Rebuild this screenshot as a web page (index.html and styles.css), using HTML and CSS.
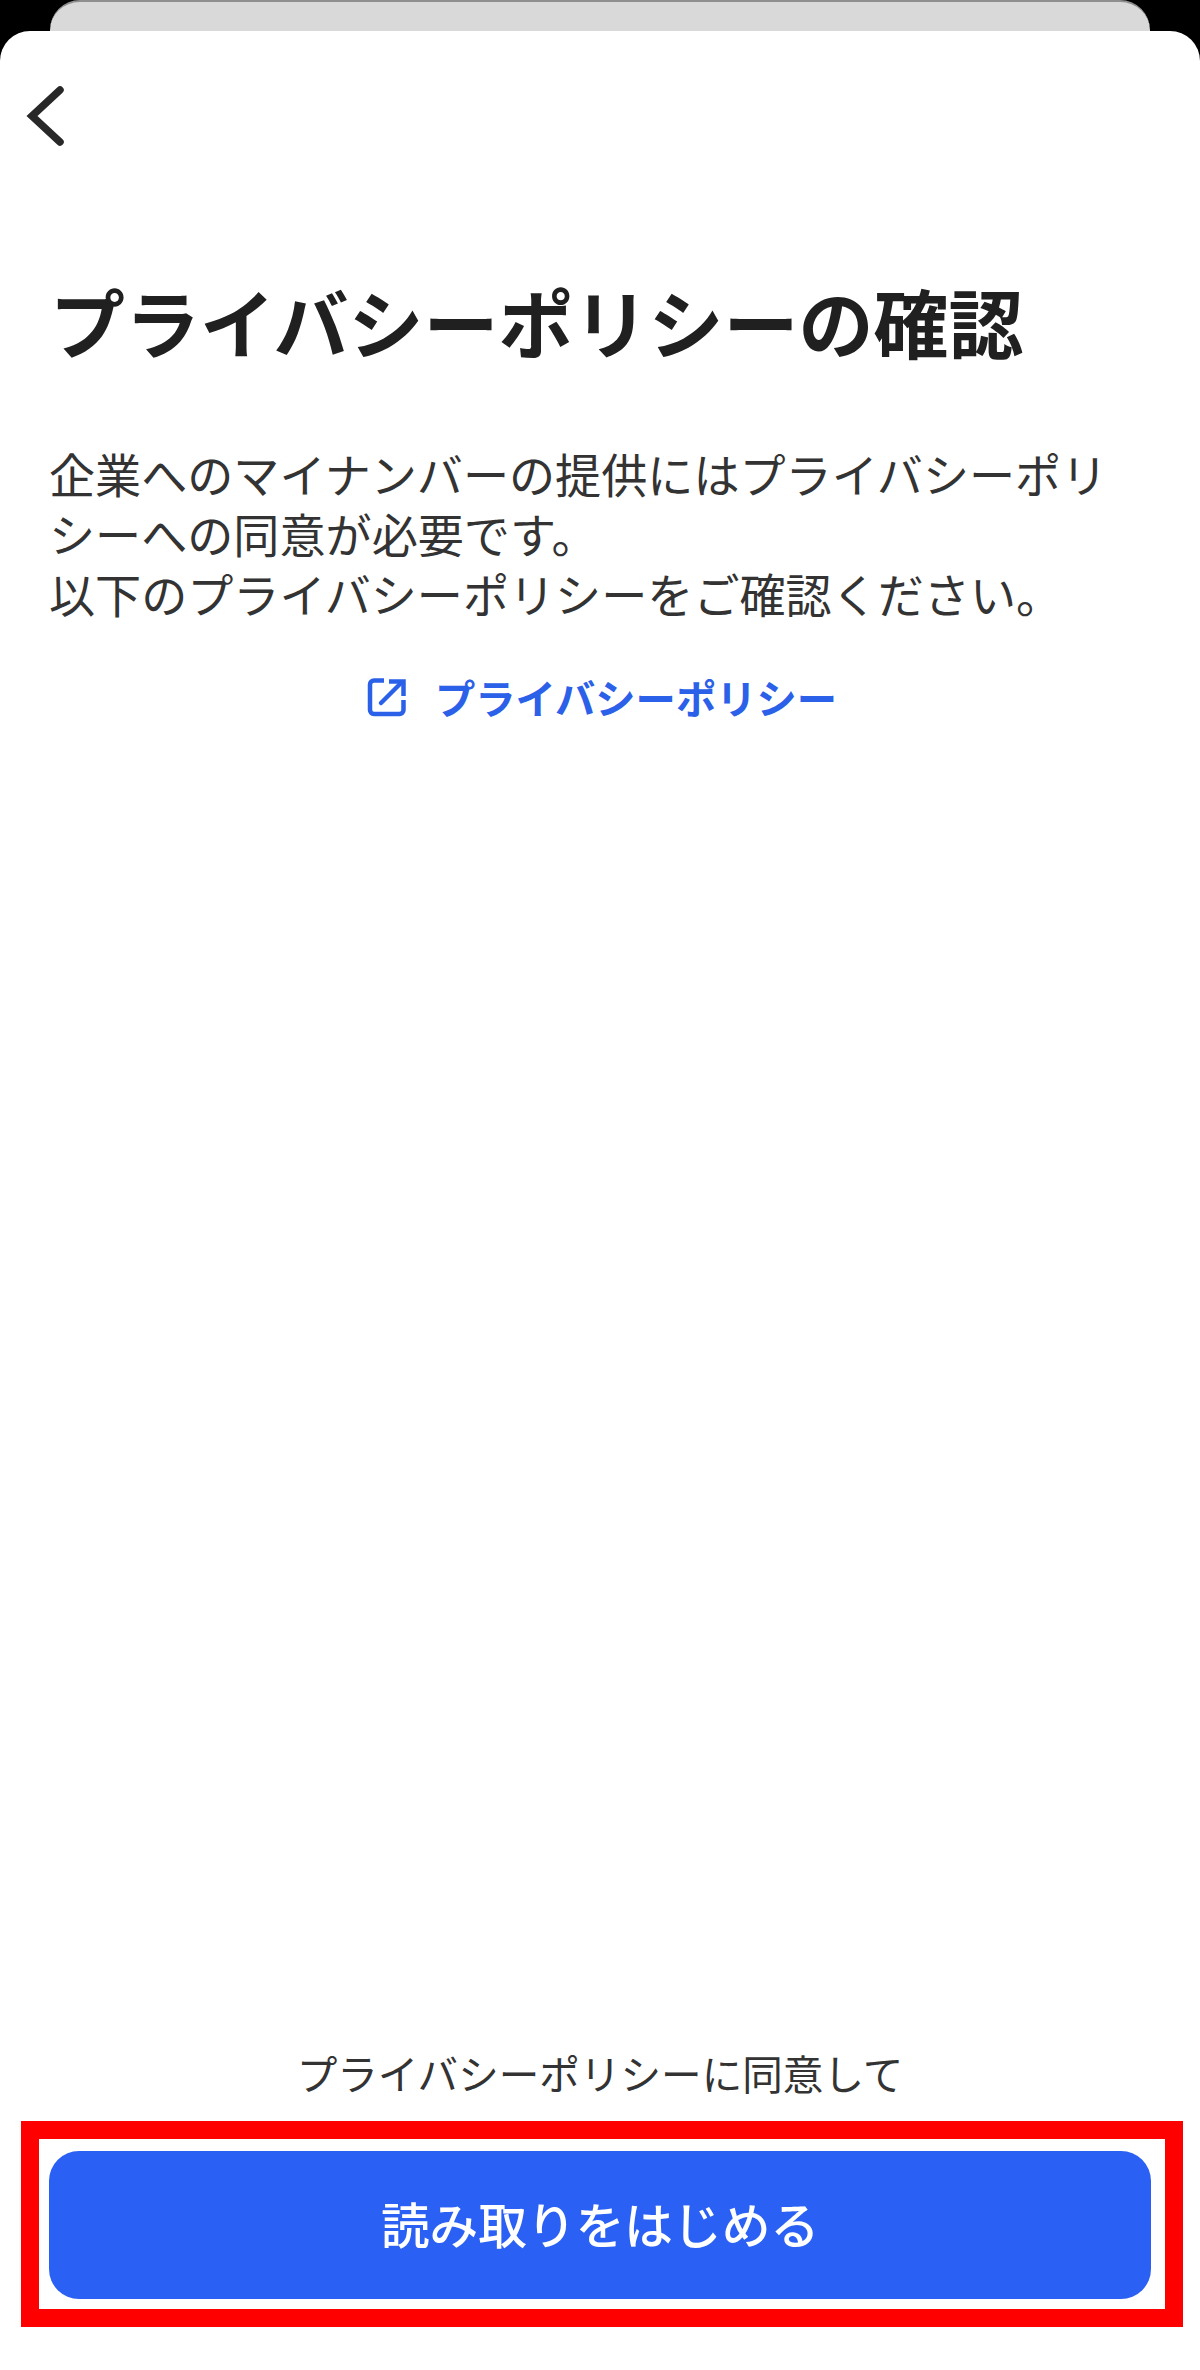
FILE: index.html
```html
<!DOCTYPE html>
<html lang="ja">
<head>
<meta charset="utf-8">
<title>プライバシーポリシーの確認</title>
<link rel="stylesheet" href="styles.css">
</head>
<body>
<div class="screen">
  <div class="peek"></div>
  <main class="sheet">
    <header class="topbar">
      <svg class="back" width="44" height="66" viewBox="0 0 44 66" fill="none" aria-label="戻る">
        <path d="M35 5 L7 31 L35 57" stroke="#282828" stroke-width="7.500" stroke-linecap="round" stroke-linejoin="miter"/>
      </svg>
    </header>
    <h1 class="title">プライバシーポリシーの確認</h1>
    <p class="lead">企業へのマイナンバーの提供にはプライバシーポリシーへの同意が必要です。<br>以下のプライバシーポリシーをご確認ください。</p>
    <a class="link">
      <svg class="link-icon" width="40" height="40" viewBox="0 0 40 40" fill="none">
        <path d="M17 3.500 H7 A4 4 0 0 0 3 7.500 V33 A4 4 0 0 0 7 37 H32.500 A4 4 0 0 0 36.500 33 V23" stroke="#2b60e8" stroke-width="4.500"/>
        <path d="M14 26 L33 7" stroke="#2b60e8" stroke-width="4.500" stroke-linecap="round"/>
        <path d="M22 4.500 H36.500 V19" stroke="#2b60e8" stroke-width="4.500"/>
      </svg>
      <span>プライバシーポリシー</span>
    </a>
    <div class="footer">
      <p class="note">プライバシーポリシーに同意して</p>
      <div class="highlight">
        <button class="cta">読み取りをはじめる</button>
      </div>
    </div>
  </main>
</div>
</body>
</html>
```

FILE: styles.css
```css
* {
  box-sizing: border-box;
}

html,
body {
  margin: 0;
  padding: 0;
  background: #000;
}

body {
  font-family: "Noto Sans CJK JP", "Noto Sans", sans-serif;
  color: #282828;
}

.screen {
  width: 1200px;
  height: 2370px;
  display: flex;
  flex-direction: column;
  background: #000;
}

.peek {
  height: 31px;
  flex: none;
  margin: 0 50px;
  background: #d9d9d9;
  border-top: 2px solid #8f8f8f;
  border-radius: 30px 30px 0 0;
}

.sheet {
  flex: 1;
  display: flex;
  flex-direction: column;
  background: #fff;
  border-radius: 30px 30px 0 0;
}

.topbar {
  height: 113px;
  padding: 54px 0 0 25px;
  flex: none;
}

.back {
  display: block;
}

.title {
  margin: 127px 0 0;
  padding-left: 50px;
  font-size: 75px;
  line-height: 100px;
  font-weight: 700;
  color: #202020;
  white-space: nowrap;
}

.lead {
  margin: 72px 0 0;
  padding: 0 49px;
  font-size: 46.100px;
  line-height: 60px;
  font-weight: 400;
  color: #333;
}

.link {
  margin-top: 44px;
  padding-left: 4px;
  display: flex;
  justify-content: center;
  align-items: center;
  gap: 28px;
  font-size: 40.300px;
  line-height: 60px;
  font-weight: 700;
  color: #2b60e8;
}

.link-icon {
  flex: none;
}

.footer {
  margin-top: auto;
  padding-bottom: 43px;
  display: flex;
  flex-direction: column;
  align-items: center;
}

.note {
  margin: 0 0 18px;
  font-size: 40.600px;
  line-height: 60px;
  color: #333;
}

.highlight {
  width: 1162px;
  height: 206px;
  margin-left: 4px;
  border: 18px solid #ff0000;
  padding: 12px 14px 12px 10px;
  background: #fff;
}

.cta {
  display: block;
  width: 100%;
  height: 148px;
  border: 0;
  border-radius: 30px;
  padding: 0 0 4px;
  background: #2a60f3;
  color: #fff;
  font-family: inherit;
  font-size: 48.700px;
  font-weight: 500;
}
```
